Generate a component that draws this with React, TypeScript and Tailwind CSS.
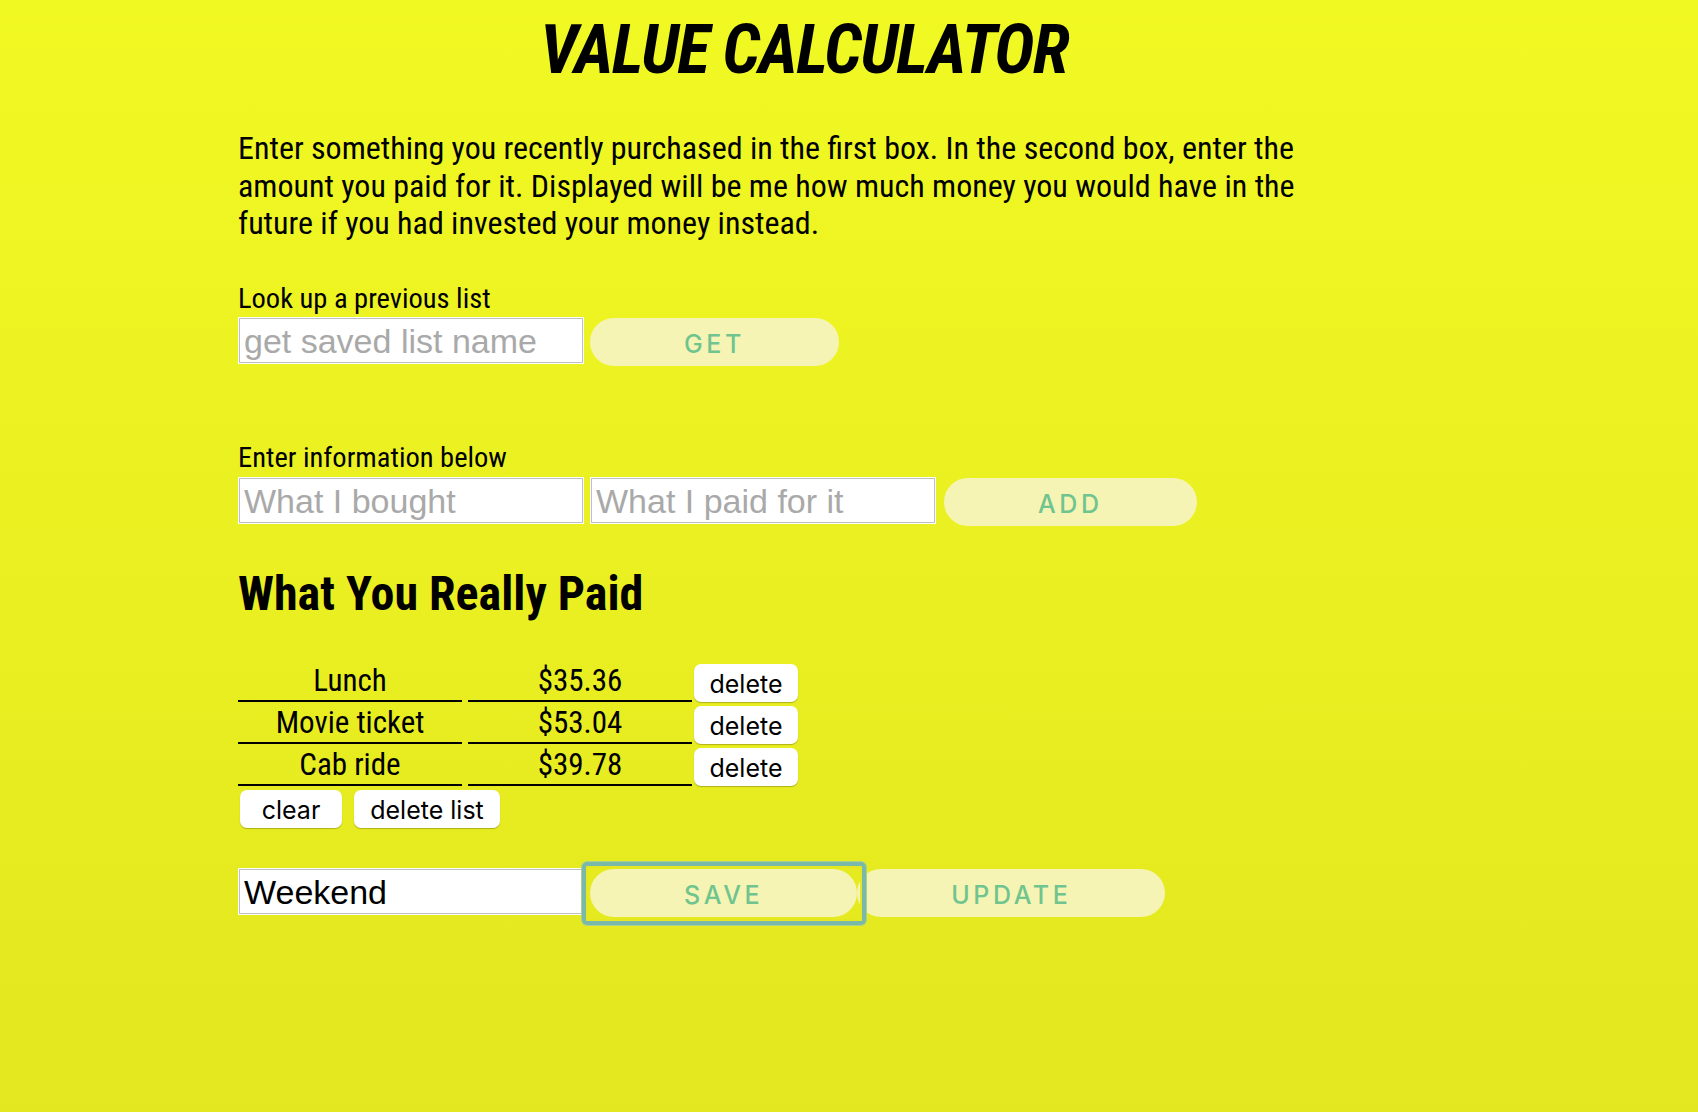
import { useState } from "react";

type Item = { name: string; price: string };

const initialItems: Item[] = [
  { name: "Lunch", price: "$35.36" },
  { name: "Movie ticket", price: "$53.04" },
  { name: "Cab ride", price: "$39.78" },
];

const inputCls =
  "w-[346px] h-[47px] bg-white border border-white shadow-[inset_0_0_0_1px_#c0c0c0] px-[5px] pt-[2px] text-[34px] font-['Liberation_Sans',Arial,sans-serif] text-black placeholder:text-[#a9a9a9] outline-none";

const pillCls =
  "h-[48px] rounded-full bg-[#f5f4b4] px-[94px] pt-[5px] text-[25px] tracking-[3.6px] text-[#6fc48f] font-['Inter',sans-serif] font-medium leading-none";

const smallBtnCls =
  "h-[38px] rounded-[7px] bg-white shadow-[0_1px_1px_rgba(0,0,0,0.25)] pt-[3px] text-[25px] text-black font-['Inter',sans-serif] leading-none";

export default function App() {
  const [items, setItems] = useState<Item[]>(initialItems);
  const [listName, setListName] = useState("Weekend");

  return (
    <div className="min-h-screen bg-gradient-to-b from-[#f1f923] to-[#e3e71f] font-['Roboto_Condensed',Roboto,sans-serif] text-black">
      <div className="ml-[238px] w-[1132px] pt-[14px] pb-[40px]">
        <h1 className="text-center text-[68px] leading-[72px] tracking-[-1.5px] font-bold italic">VALUE CALCULATOR</h1>

        <p className="mt-[44px] max-w-[1090px] text-[32px] leading-[37.5px]">
          Enter something you recently purchased in the first box. In the second box, enter the amount you paid for it.
          Displayed will be me how much money you would have in the future if you had invested your money instead.
        </p>

        <div className="mt-[40px] text-[28.5px] leading-[32px]">Look up a previous list</div>
        <div className="mt-[2px] flex items-start gap-[6px]">
          <input className={inputCls} placeholder="get saved list name" />
          <button className={`${pillCls} mt-[1px]`}>GET</button>
        </div>

        <div className="mt-[76px] text-[28.5px] leading-[32px]">Enter information below</div>
        <div className="mt-[3px] flex items-start">
          <input className={inputCls} placeholder="What I bought" />
          <input className={`${inputCls} ml-[6px]`} placeholder="What I paid for it" />
          <button className={`${pillCls} ml-[8px] mt-[1px]`}>ADD</button>
        </div>

        <h2 className="mt-[40px] text-[48px] leading-[56px] font-bold">What You Really Paid</h2>

        <div className="mt-[38px]">
          {items.map((it, i) => (
            <div key={i} className="flex items-end">
              <div className="w-[224px] h-[42px] border-b-2 border-black text-center text-[31px] leading-[38px] pt-[2px]">
                {it.name}
              </div>
              <div className="ml-[6px] w-[224px] h-[42px] border-b-2 border-black text-center text-[31px] leading-[38px] pt-[2px]">
                {it.price}
              </div>
              <button
                className={`${smallBtnCls} ml-[2px] w-[104px]`}
                onClick={() => setItems(items.filter((_, j) => j !== i))}
              >
                delete
              </button>
            </div>
          ))}
        </div>

        <div className="mt-[4px] ml-[2px] flex gap-[12px]">
          <button className={`${smallBtnCls} w-[102px]`} onClick={() => setItems([])}>
            clear
          </button>
          <button className={`${smallBtnCls} w-[146px]`}>delete list</button>
        </div>

        <div className="mt-[40px] flex items-start">
          <input className={inputCls} value={listName} onChange={(e) => setListName(e.target.value)} />
          <span className="relative ml-[6px] mt-[1px]">
            <button className={pillCls}>SAVE</button>
            <span className="absolute -left-[8px] -right-[9px] -top-[7px] -bottom-[8px] rounded-[5px] border-[4px] border-[#7ab8a9] shadow-[0_0_0_1px_#a9d08f,inset_0_0_0_2px_#e6e81f] pointer-events-none" />
          </span>
          <button className={`${pillCls} mt-[1px]`}>UPDATE</button>
        </div>
      </div>
    </div>
  );
}
